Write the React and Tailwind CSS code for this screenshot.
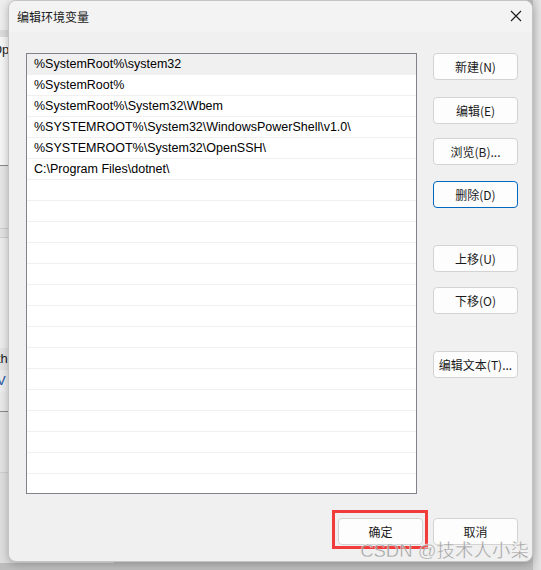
import React from 'react';

const paths = [
  '%SystemRoot%\\system32',
  '%SystemRoot%',
  '%SystemRoot%\\System32\\Wbem',
  '%SYSTEMROOT%\\System32\\WindowsPowerShell\\v1.0\\',
  '%SYSTEMROOT%\\System32\\OpenSSH\\',
  'C:\\Program Files\\dotnet\\',
];

const rows = [...paths, ...Array(15).fill('')];

const cjk = { fontFamily: '"Noto Sans CJK SC", "Noto Sans", sans-serif' };
const latin = { fontFamily: '"Liberation Sans", "Noto Sans CJK SC", sans-serif' };

const Btn = ({ label, focused, className = '' }) => (
  <button
    className={`h-[27px] w-[85px] rounded-[4px] bg-[#fdfdfd] text-[12px] text-[#1a1a1a] ${
      focused ? 'border border-[#0067c0]' : 'border border-[#d3d3d3]'
    } ${className}`}
    style={cjk}
  >
    {label}
  </button>
);

const App = () => {
  return (
    <div className="relative h-[570px] w-[541px] overflow-hidden bg-[#bdbdbd]">
      {/* window behind the dialog */}
      <div className="absolute left-0 top-0 h-[563px] w-[115px] rounded-br-md border-r border-b border-[#a8a8a8] bg-[#ececec]">
        <div className="h-[30px] bg-[#eeeeee]" />
        <div className="h-[7px] bg-[#dcdcdc]" />
        <div className="h-[128px] bg-[#f6f6f6] pt-[3px] text-[13px] text-[#222]" style={latin}>
          <span className="-ml-[8px]">Op</span>
        </div>
        <div className="h-[1px] bg-[#8a8a8a]" />
        <div className="h-[62px] bg-[#e6e6e6]" />
        <div className="h-[1px] bg-[#cfcfcf]" />
        <div className="h-[8px] bg-[#e2e2e2]" />
        <div className="h-[1px] bg-[#cfcfcf]" />
        <div className="h-[110px] bg-[#ececec]" />
        <div className="h-[22px] bg-[#e4e4e4] text-[13px] leading-[22px] text-[#222]" style={latin}>
          <span className="-ml-[3px]">th</span>
        </div>
        <div className="h-[22px] bg-[#ececec] text-[13px] leading-[22px] text-[#1a4f9c]" style={latin}>
          <span className="-ml-[3px]">V</span>
        </div>
        <div className="h-[19px] bg-[#e9e9e9]" />
        <div className="h-[1px] bg-[#8a8a8a]" />
        <div className="h-[60px] bg-[#e2e2e2]" />
        <div className="h-[1px] bg-[#cfcfcf]" />
        <div className="h-[90px] bg-[#dedede]" />
      </div>
      <div className="absolute right-0 top-0 h-[570px] w-[8px] bg-gradient-to-r from-[#d6d6d6] to-[#e4e4e4]" />

      {/* dialog */}
      <div className="absolute left-[8px] top-0 flex h-[562px] w-[525px] flex-col overflow-hidden rounded-[8px] border border-[#c4c4c4] bg-[#f0f0f0] shadow-[0_2px_8px_rgba(0,0,0,0.25)]">
        <div className="flex h-[31px] shrink-0 items-center justify-between bg-[#f3f3f3] pl-[8px] pr-[10px]">
          <span className="text-[12px] text-[#1a1a1a]" style={cjk}>编辑环境变量</span>
          <svg width="12" height="12" viewBox="0 0 12 12" className="mt-[-1px]">
            <path d="M1 1 L11 11 M11 1 L1 11" stroke="#1a1a1a" strokeWidth="1.1" fill="none" />
          </svg>
        </div>

        <div className="flex pl-[17px] pt-[21px]">
          <div className="h-[441px] w-[391px] overflow-hidden border border-[#82828c] bg-white">
            {rows.map((p, i) => (
              <div
                key={i}
                className={`h-[21px] border-b border-[#f0f0f0] pl-[7px] text-[12.5px] leading-[20px] text-black ${
                  i === 0 ? 'bg-[#f0f0f0]' : ''
                }`}
                style={latin}
              >
                {p}
              </div>
            ))}
          </div>

          <div className="ml-[16px] flex flex-col">
            <Btn label="新建(N)" />
            <Btn label="编辑(E)" className="mt-[17px]" />
            <Btn label="浏览(B)..." className="mt-[14px]" />
            <Btn label="删除(D)" focused className="mt-[16px]" />
            <Btn label="上移(U)" className="mt-[37px]" />
            <Btn label="下移(O)" className="mt-[15px]" />
            <Btn label="编辑文本(T)..." className="mt-[37px]" />
          </div>
        </div>

        <div className="mt-[24px] flex justify-end gap-[10px] pr-[14px]">
          <div className="relative">
            <Btn label="确定" />
            <div className="pointer-events-none absolute -left-[6px] -right-[5px] -top-[8px] -bottom-[4px] border-[3px] border-[#f23b3b]" />
          </div>
          <Btn label="取消" />
        </div>

        <div
          className="pointer-events-none absolute bottom-[1px] right-[3px] text-[18.5px] leading-none text-[#8c8c8c]/80"
          style={{ fontFamily: '"Liberation Sans", "Noto Sans CJK SC", sans-serif', WebkitTextStroke: '0.3px #ffffff' }}
        >
          CSDN @技术人小柒
        </div>
      </div>
    </div>
  );
};

export default App;
